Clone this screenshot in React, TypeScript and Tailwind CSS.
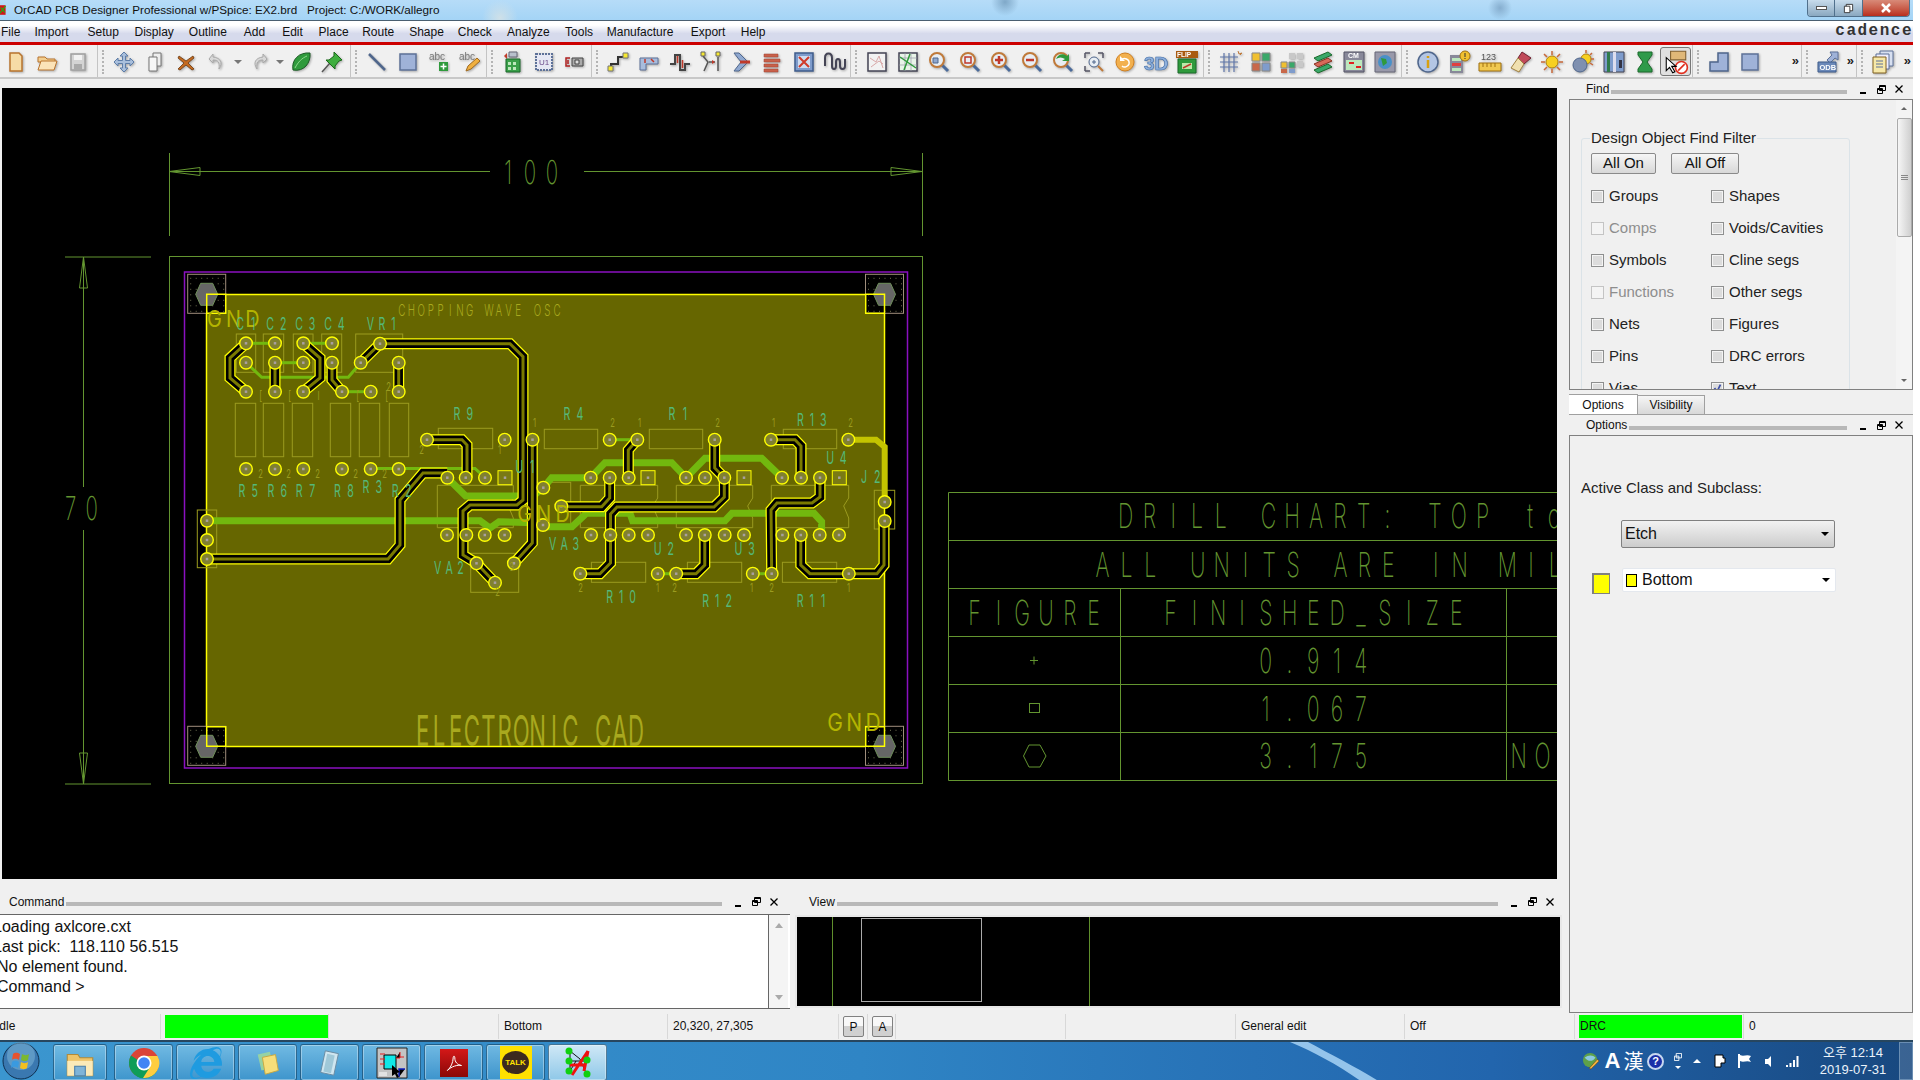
import React from 'react';
import { FaInternetExplorer } from 'react-icons/fa';

const CHART = '#639530';
const OUTLINE = '#9b9b1f';
const LABEL = '#55b878';
const SILK = '#a8a81e';

const S = ({ children, a = 'none' }: { children: React.ReactNode; a?: string }) => (
  <svg viewBox="0 0 24 24" width="24" height="24" fill={a} className="drop-shadow-[1px_1px_1px_rgba(0,0,0,0.3)]">{children}</svg>
);

const lens = (inner: React.ReactNode) => (
  <>
    <path d="M15 15l6 6" stroke="#4a6a9a" strokeWidth="3" />
    <circle cx="10" cy="10" r="7" fill="#e8eef4" stroke="#c07a3a" strokeWidth="2" />
    {inner}
  </>
);

const icons: Record<string, React.ReactNode> = {
  new: <path d="M6 3h9l3 3v15H6z" fill="#f6dca6" stroke="#b9742e" strokeWidth="1.5" />,
  open: <><path d="M3 7h7l2 2h8v3H3z" fill="#f3cf90" stroke="#b9742e" /><path d="M3 20l3-9h16l-3 9z" fill="#fbe3b8" stroke="#b9742e" /></>,
  save: <><path d="M5 4h14v16H5z" fill="#d4d4d4" stroke="#a0a0a0" strokeWidth="1.5" /><path d="M8 5h8v5H8z" fill="#f2f2f2" /><path d="M8 14h8v6H8z" fill="#aaa" /></>,
  move: <path d="M12 2l4 4h-2.500v4.500H18V8l4 4-4 4v-2.500h-4.500V18H16l-4 4-4-4h2.500v-4.500H6V16l-4-4 4-4v2.500h4.500V6H8z" fill="#a9bfdc" stroke="#5d7da8" />,
  copy: <><path d="M10 3h8v13h-8z" fill="#eee" stroke="#777" /><path d="M6 7h8v14H6z" fill="#f6f6f6" stroke="#777" /></>,
  del: <path d="M5 6l7 5 7-5 1 2-6 5 6 6-2 1-6-5-6 5-2-1 6-6-6-5z" fill="#c46a20" stroke="#6a3a10" strokeWidth=".8" />,
  undo: <path d="M8 4L4 9l4 4v-3c5 0 7 2 6 9 4-6 2-11-6-12z" fill="#d8d8d8" stroke="#aaa" />,
  redo: <path d="M16 4l4 5-4 4v-3c-5 0-7 2-6 9-4-6-2-11 6-12z" fill="#d8d8d8" stroke="#aaa" />,
  leaf: <><path d="M4 20C2 10 10 2 21 3c1 10-6 19-17 17z" fill="#2f9a3c" stroke="#1b5a24" /><path d="M6 18C9 12 13 8 18 6" stroke="#8fd88f" /></>,
  pin: <><path d="M2 22l8-9" stroke="#555" strokeWidth="1.5" /><path d="M14 2l8 8-3 1-4 5 0 3-9-9 3 0 5-4z" fill="#3fae3f" stroke="#1a6a1a" /></>,
  line: <path d="M4 4l16 16" stroke="#4f668c" strokeWidth="2.500" />,
  rect: <path d="M4 4h16v16H4z" fill="#9fb2d8" stroke="#5d7198" strokeWidth="1.5" />,
  abcadd: <><text x="2" y="10" fontSize="10" fill="#777" fontFamily="Liberation Sans">abc</text><path d="M12 12h9v9h-9z" fill="#2f9a3c" /><path d="M16.500 13.500v6M13.500 16.500h6" stroke="#fff" strokeWidth="1.5" /></>,
  abcedit: <><text x="1" y="10" fontSize="10" fill="#777" fontFamily="Liberation Sans">abc</text><path d="M8 21l2-5 9-8 3 3-9 8z" fill="#f0b040" stroke="#a06a20" /></>,
  swap: <><path d="M5 9h14v13H5z" fill="#3aa04a" stroke="#1a6a2a" /><path d="M7 12h3v3H7zM12 12h3v3h-3zM7 17h3v3H7zM12 17h3v3h-3z" fill="#bce8bc" /><path d="M8 2h8v5H8z" fill="#b8c0cc" stroke="#667" /><path d="M3 6l3-3v6z" fill="#c03a2a" /></>,
  chip: <><path d="M4 4h16v16H4z" fill="#e6e8f4" stroke="#5d7198" strokeDasharray="2 1" strokeWidth="2" /><text x="7" y="15" fontSize="8" fill="#6a4a8a" fontFamily="Liberation Sans">U1</text></>,
  conn: <><path d="M9 8h11v8H9z" fill="#aaa" stroke="#444" /><path d="M12 10h4v4h-4z" fill="#ddd" stroke="#444" /><path d="M7 8H3v8h4M5 10v4" stroke="#b02020" strokeWidth="1.5" /></>,
  route: <><path d="M5 19v-5h7V7h6" stroke="#333" strokeWidth="2" /><path d="M2 16h5v5H2zM17 3h5v5h-5z" fill="#f6e830" stroke="#777" /></>,
  slide: <><path d="M3 20V8h18v6H9v6z" fill="#a8bcdc" stroke="#5d7198" /><path d="M8 9v4M14 9l3 3" stroke="#c03a2a" strokeWidth="1.5" /></>,
  delay: <><path d="M2 14h5V5h5v15h5v-6h5" stroke="#444" strokeWidth="2" /><path d="M9.500 6v7M14.500 10v8" stroke="#c03a2a" strokeWidth="1.5" /></>,
  fanout: <><path d="M4 6l5 6-4 9M19 7v14M10 12h6" stroke="#555" strokeWidth="1.5" /><path d="M2 2h4v4H2zM17 2h4v4h-4z" fill="#f6e830" stroke="#666" /><path d="M16 12l-3-2v4z" fill="#c03a2a" /></>,
  chev: <><path d="M4 3h5l9 9-9 9H4l7-9z" fill="#8fa8d0" stroke="#4f668c" /><path d="M10 12h10" stroke="#c03a2a" strokeWidth="3" /></>,
  bars: <path d="M3 4h14v3H3zM3 9h16v3H3zM3 14h14v3H3zM3 19h14v3H3z" fill="#c8604a" stroke="#a04030" strokeWidth=".5" />,
  matrix: <><path d="M3 3h18v18H3z" fill="#7f9ccc" stroke="#3f5c8c" strokeWidth="1.5" /><path d="M6 6h12v12H6z" fill="#cfdcf0" /><path d="M7 7l10 10M17 7L7 17" stroke="#d03a2a" strokeWidth="2" /></>,
  wave: <path d="M2 16V8c0-6 7-6 7 0v8c0 4 4 4 4 0v-4c0-4 4-4 4 0v4c0 4 5 4 5 0V9" stroke="#445" strokeWidth="2" />,
  rats: <><path d="M3 3h18v18H3z" fill="#f2f2f2" stroke="#445" strokeWidth="1.5" /><path d="M5 8l6 4 3-6 4 12M6 17l8-6 4 3" stroke="#d8a8a8" /></>,
  ratsg: <><path d="M3 3h18v18H3z" fill="#e8f4e8" stroke="#445" strokeWidth="1.5" /><path d="M3 8h18M3 15h18M9 3v18M15 3v18" stroke="#99a" strokeWidth=".7" /><path d="M4 7l16 11M8 20l6-16" stroke="#2f9a3c" strokeWidth="1.5" /></>,
  zfit: lens(<path d="M6 8h5v5H6z" fill="#8fa8d0" stroke="#4f668c" />),
  zsel: lens(<path d="M7 7h6v6H7z" stroke="#c0392b" strokeWidth="1.5" />),
  zin: lens(<path d="M6 10h8M10 6v8" stroke="#c0392b" strokeWidth="2.500" />),
  zout: lens(<path d="M6 10h8" stroke="#c0392b" strokeWidth="2.500" />),
  zprev: lens(<path d="M5 9c2-5 7-6 11-3l2-2v7h-7l3-2c-3-2-6-2-9 0z" fill="#2f9a3c" />),
  zworld: <><path d="M3 3h5M3 3v5M21 3h-5M21 3v5M3 21h5M3 21v-5" stroke="#556" strokeWidth="1.5" /><circle cx="12" cy="12" r="5" fill="#e8eef4" stroke="#4f668c" /><path d="M16 16l5 5" stroke="#c07a3a" strokeWidth="2" /><path d="M10 12h4M12 10v4" stroke="#4f668c" /></>,
  refresh: <><circle cx="12" cy="12" r="9" fill="#f2b04e" stroke="#d08020" /><path d="M8 10c3-3 9-1 8 4-1 3-5 4-7 2" stroke="#fff" strokeWidth="1.5" /><path d="M7 6v5h5z" fill="#fff" /></>,
  three: <text x="0" y="20" fontSize="19" fontWeight="700" fill="#8fb0dc" stroke="#3f6ca8" strokeWidth=".6" fontFamily="Liberation Sans">3D</text>,
  flip: <><path d="M1 1h22v7H1z" fill="#a85a10" /><text x="2" y="7" fontSize="6.500" fontWeight="700" fill="#fff" fontFamily="Liberation Sans">FLIP</text><path d="M3 9h18v14H3z" fill="#2f9a3c" stroke="#1a6a2a" /><path d="M7 13h10v6H7z" fill="#bfe8a8" /><path d="M8 18l8-4" stroke="#c03a2a" strokeWidth="1.5" /></>,
  grid: <><path d="M2 7h18M2 12h18M2 17h18M6 3v19M11 3v19M16 3v19" stroke="#5f76a8" strokeWidth="1.2" /><path d="M20 1l1 3 3-1-2 2" stroke="#c07a3a" /></>,
  colorsAll: <><path d="M3 3h8v8H3z" fill="#f0c030" stroke="#888" /><path d="M13 3h8v8h-8z" fill="#3aa86a" stroke="#888" /><path d="M3 13h8v8H3z" fill="#c8684a" stroke="#888" /><path d="M13 13h8v8h-8z" fill="#7f9ccc" stroke="#888" /></>,
  colorsDim: <><path d="M1 12h6v6H1z" fill="#f0c030" stroke="#888" /><path d="M9 12h6v6H9z" fill="#3aa86a" stroke="#888" /><path d="M1 19h6v4H1z" fill="#c8684a" /><path d="M9 19h6v4H9z" fill="#7f9ccc" /><path d="M9 3h6v6H9zM17 3h6v6h-6zM17 11h6v6h-6z" fill="#c8c8c8" /></>,
  layers: <><path d="M3 8l14-6 4 3-14 6z" fill="#3aa86a" stroke="#1a6a2a" /><path d="M3 14l14-6 4 3-14 6z" fill="#d86a5a" stroke="#8a3020" /><path d="M3 20l14-6 4 3-14 6z" fill="#3aa86a" stroke="#1a6a2a" /></>,
  cm: <><path d="M2 2h20v20H2z" fill="#889" stroke="#556" /><text x="6" y="8" fontSize="7" fontWeight="700" fill="#fff" fontFamily="Liberation Sans">CM</text><path d="M4 10h16v10H4z" fill="#bce8bc" /><path d="M7 12h5v2H7zM14 16h5v2h-5z" fill="#e02020" /></>,
  globe: <><path d="M2 2h20v20H2z" fill="#99a" stroke="#667" /><circle cx="12" cy="12" r="7" fill="#4a90c8" /><path d="M8 8l5 1 1 4-4 3z" fill="#2f9a3c" /></>,
  info: <><circle cx="12" cy="12" r="10" fill="#b4c6e4" stroke="#4f668c" strokeWidth="1.5" /><path d="M12 6v2M12 10v8" stroke="#d8a010" strokeWidth="2.500" /></>,
  props: <><path d="M3 5h13v18H3z" fill="#889" /><path d="M5 8h9v3H5z" fill="#bce8bc" /><path d="M5 13h9v3H5z" fill="#e04040" /><path d="M5 18h9v3H5z" fill="#bce8bc" /><circle cx="18" cy="6" r="5" fill="#f0c030" stroke="#a07010" /><path d="M18 3v4M18 8v1" stroke="#333" /></>,
  ruler: <><text x="3" y="10" fontSize="9" fill="#555" fontFamily="Liberation Sans">123</text><path d="M1 13h22v8H1z" fill="#f0c850" stroke="#a07010" /><path d="M5 13v4M9 13v4M13 13v4M17 13v4" stroke="#a07010" /></>,
  brush: <><path d="M13 2l9 6-7 6-6-6z" fill="#c04a5a" stroke="#702030" /><path d="M9 8l6 6-5 8-8-4z" fill="#f0e0b0" stroke="#a08040" /></>,
  sun: <><circle cx="12" cy="12" r="6" fill="#f6d020" stroke="#b08010" /><path d="M12 1v4M12 19v4M1 12h4M19 12h4M4 4l3 3M17 17l3 3M4 20l3-3M17 7l3-3" stroke="#c8683a" strokeWidth="1.5" /></>,
  sunball: <><circle cx="15" cy="9" r="5" fill="#f6d020" stroke="#b08010" /><path d="M15 0v3M23 9h-3M21 3l-2 2M22 15l-3-2" stroke="#c8683a" strokeWidth="1.5" /><circle cx="9" cy="15" r="7" fill="#7f90b0" stroke="#4f668c" /></>,
  columns: <><path d="M2 2h20v20H2z" fill="#7f9ccc" stroke="#445" /><path d="M5 2h3v20H5z" fill="#2f7a4a" /><path d="M11 2h3v20h-3z" fill="#dde" /><path d="M17 10h3v8h-3z" fill="#334" /></>,
  hour: <path d="M5 2h14v3l-5 7 5 7v3H5v-3l5-7-5-7z" fill="#2f9a4a" stroke="#1a6a2a" />,
  shape1: <path d="M3 21V12h8V3h10v18z" fill="#9fb2d8" stroke="#4f668c" strokeWidth="1.5" />,
  odb: <><path d="M14 2h8v8l-3-2-5 5-3-3 5-5z" fill="#9fb2d8" stroke="#5d7198" /><path d="M2 12h18v10H2z" fill="#6a88b8" stroke="#3f5c8c" /><text x="3.500" y="20" fontSize="7.500" fontWeight="700" fill="#fff" fontFamily="Liberation Sans">ODB</text></>,
  stack: <><path d="M9 1h13v15H9z" fill="#d8e0f0" stroke="#5d7198" /><path d="M5 4h13v15H5z" fill="#eef" stroke="#5d7198" /><path d="M2 7h13v16H2z" fill="#f6e8a8" stroke="#806020" /><path d="M5 11h7M5 14h7M5 17h7" stroke="#5d7198" /></>,
};

const Tb = ({ n }: { n: string }) => (
  <div className="w-[31px] h-[33px] shrink-0 flex items-center justify-center">
    <S>{icons[n]}</S>
  </div>
);

const Dd = () => (
  <div className="w-[11px] h-[33px] shrink-0 flex items-center justify-center">
    <div className="w-0 h-0 border-x-[4px] border-x-transparent border-t-[4px] border-t-[#777]" />
  </div>
);

const Grip = () => (
  <div className="w-[10px] h-[33px] shrink-0 flex items-center pl-[4px]">
    <div className="h-[24px] border-l-2 border-dotted border-[#b4b4b4]" />
  </div>
);

const More = () => <div className="text-[13px] font-bold text-[#222] leading-none ml-auto pr-[2px] pb-[2px]">»</div>;

const Group = ({ className, grip = true, children }: { className: string; grip?: boolean; children: React.ReactNode }) => (
  <div className={`h-[33px] shrink-0 flex items-center border-r border-[#c4c4c4] ${className}`}>
    {grip && <Grip />}
    {children}
  </div>
);

function Toolbar() {
  return (
    <div className="h-[34px] flex bg-[#f0f0f0] border-b-2 border-[#c8c8c8] overflow-hidden">
      <Group className="w-[98px]" grip={false}>
        {['new', 'open', 'save'].map((n) => <Tb key={n} n={n} />)}
      </Group>
      <Group className="w-[253px]">
        <Tb n="move" /><Tb n="copy" /><Tb n="del" /><Tb n="undo" /><Dd /><Tb n="redo" /><Dd /><Tb n="leaf" /><Tb n="pin" />
      </Group>
      <Group className="w-[136px]">
        {['line', 'rect', 'abcadd', 'abcedit'].map((n) => <Tb key={n} n={n} />)}
      </Group>
      <Group className="w-[105px]">
        {['swap', 'chip', 'conn'].map((n) => <Tb key={n} n={n} />)}
      </Group>
      <Group className="w-[259px]">
        {['route', 'slide', 'delay', 'fanout', 'chev', 'bars', 'matrix', 'wave'].map((n) => <Tb key={n} n={n} />)}
      </Group>
      <Group className="w-[353px]">
        {['rats', 'ratsg', 'zfit', 'zsel', 'zin', 'zout', 'zprev', 'zworld', 'refresh', 'three', 'flip'].map((n) => <Tb key={n} n={n} />)}
      </Group>
      <Group className="w-[198px]">
        {['grid', 'colorsAll', 'colorsDim', 'layers', 'cm', 'globe'].map((n) => <Tb key={n} n={n} />)}
      </Group>
      <Group className="w-[291px]">
        {['info', 'props', 'ruler', 'brush', 'sun', 'sunball', 'columns', 'hour'].map((n) => <Tb key={n} n={n} />)}
        <div className="relative w-[31px] h-[29px] shrink-0 flex items-center justify-center border border-[#777] rounded-[3px] bg-[#e0e0e0]">
          <svg viewBox="0 0 24 24" width="26" height="26" fill="none">
            <path d="M7 2h14v8H7z" fill="#e0b878" stroke="#806030" />
            <circle cx="17" cy="17" r="5.500" fill="#fff" stroke="#e03020" strokeWidth="1.5" />
            <path d="M14 20l6-6" stroke="#e03020" strokeWidth="1.5" />
            <path d="M3 8l0 12 3-3 3 5 2-1-3-5h4z" fill="#fff" stroke="#000" />
          </svg>
        </div>
      </Group>
      <Group className="w-[109px]">
        <Tb n="shape1" /><Tb n="rect" /><More />
      </Group>
      <Group className="w-[55px]">
        <Tb n="odb" /><More />
      </Group>
      <Group className="w-[56px] border-r-0">
        <Tb n="stack" /><More />
      </Group>
    </div>
  );
}

const menus: [string, string][] = [
  ['File', 'w-[33.5px]'], ['Import', 'w-[53px]'], ['Setup', 'w-[47px]'], ['Display', 'w-[54.3px]'], ['Outline', 'w-[55px]'],
  ['Add', 'w-[38.4px]'], ['Edit', 'w-[36.4px]'], ['Place', 'w-[43.6px]'], ['Route', 'w-[47px]'], ['Shape', 'w-[48.6px]'],
  ['Check', 'w-[49.3px]'], ['Analyze', 'w-[58px]'], ['Tools', 'w-[41.7px]'], ['Manufacture', 'w-[84px]'], ['Export', 'w-[50px]'], ['Help', 'w-[40px]'],
];

const DockTitle = ({ title, className, bar = '' }: { title: string; className: string; bar?: string }) => (
  <div className={`flex items-center text-[12px] text-[#111] ${className}`}>
    <span>{title}</span>
    <div className={`flex-1 h-[4px] bg-[#b8b8b8] mt-[5px] ml-[2px] ${bar}`} />
    <div className="ml-[7px] w-[18px] flex justify-center pt-[8px]"><div className="w-[6px] h-[2px] bg-black" /></div>
    <div className="w-[18px] flex justify-center">
      <svg viewBox="0 0 9 9" width="9" height="9" fill="none" stroke="#000"><path d="M2.500.500h6v5h-6zM2.500 1.500h6" /><path d="M.500 3.500h5v5h-5zM.500 4.500h5" /></svg>
    </div>
    <div className="w-[18px] flex justify-center">
      <svg viewBox="0 0 8 8" width="8" height="8" fill="none" stroke="#000" strokeWidth="1.3"><path d="M.500.500l7 7M7.500.500l-7 7" /></svg>
    </div>
  </div>
);

const Check = ({ label, off, on }: { label: string; off?: boolean; on?: boolean }) => (
  <div className={`flex items-center gap-[5px] h-[32px] text-[15px] ${off ? 'text-[#8d8d8d]' : 'text-[#222]'}`}>
    <div className={`relative w-[13px] h-[13px] border bg-[#f4f4f4] flex items-center justify-center ${off ? 'border-[#c4c4c4]' : 'border-[#8e8f8f]'}`}>
      {!off && <div className="w-[9px] h-[9px] bg-[#dcdcdc]" />}
      {on && (
        <svg className="absolute inset-0" viewBox="0 0 13 13" fill="none" stroke="#3c4fa8" strokeWidth="2"><path d="M3 6l3 4 4-8" /></svg>
      )}
    </div>
    <span>{label}</span>
  </div>
);

const Triangle = () => <div className="w-0 h-0 border-x-[4px] border-x-transparent border-t-[4px] border-t-black" />;

function FindPanel() {
  return (
    <div className="relative h-[291px] border border-[#808080] overflow-hidden bg-[#f0f0f0] flex">
      <div className="w-[326px]">
        <div className="relative mt-[38px] ml-[11px] w-[269px] h-[300px] border border-[#dbe3e8] rounded-[3px] pl-[9px]">
          <span className="absolute -top-[10px] left-[8px] px-[1px] bg-[#f0f0f0] text-[15px] leading-[18px] text-[#222]">Design Object Find Filter</span>
          <div className="flex gap-[15px] pt-[14px] text-[15px] text-[#111]">
            <div className="w-[65px] h-[21px] flex items-center justify-center border border-[#8a8a8a] rounded-[2px] bg-linear-to-b from-[#f6f6f6] to-[#d8d8d8]">All On</div>
            <div className="w-[68px] h-[21px] flex items-center justify-center border border-[#8a8a8a] rounded-[2px] bg-linear-to-b from-[#f6f6f6] to-[#d8d8d8]">All Off</div>
          </div>
          <div className="grid grid-cols-[120px_1fr] mt-[6px]">
            <Check label="Groups" /><Check label="Shapes" />
            <Check label="Comps" off /><Check label="Voids/Cavities" />
            <Check label="Symbols" /><Check label="Cline segs" />
            <Check label="Functions" off /><Check label="Other segs" />
            <Check label="Nets" /><Check label="Figures" />
            <Check label="Pins" /><Check label="DRC errors" />
            <Check label="Vias" /><Check label="Text" on />
          </div>
        </div>
      </div>
      <div className="relative w-[16px] bg-[#f4f4f4] flex flex-col items-center">
        <div className="mt-[7px] w-0 h-0 border-x-[3px] border-x-transparent border-b-[3px] border-b-[#666]" />
        <div className="mt-[8px] w-[15px] h-[119px] bg-linear-to-r from-[#f6f6f6] to-[#cfcfcf] border border-[#aaa] rounded-[2px] flex flex-col items-center justify-center gap-[1px]">
          <div className="w-[7px] h-px bg-[#888]" /><div className="w-[7px] h-px bg-[#888]" /><div className="w-[7px] h-px bg-[#888]" />
        </div>
        <div className="mt-auto mb-[7px] w-0 h-0 border-x-[3px] border-x-transparent border-t-[3px] border-t-[#666]" />
      </div>
    </div>
  );
}

function OptionsPanel() {
  return (
    <div className="flex-1 border border-[#808080] bg-[#f0f0f0] pl-[11px]">
      <div className="mt-[43px] text-[15px] leading-[18px] text-[#222]">Active Class and Subclass:</div>
      <div className="mt-[23px] ml-[40px] w-[214px] h-[28px] flex items-center justify-between pl-[3px] pr-[5px] border border-[#808080] rounded-[2px] bg-linear-to-b from-[#f2f2f2] to-[#cccccc] text-[16px] text-[#111]">
        <span>Etch</span>
        <Triangle />
      </div>
      <div className="flex items-start mt-[20px] ml-[11px]">
        <div className="mt-[5px] w-[18px] h-[21px] bg-[#ffff00] border-2 border-r border-b border-[#808080]" />
        <div className="ml-[12px] w-[214px] h-[24px] flex items-center justify-between pl-[3px] pr-[5px] bg-white border border-[#e4e8ee] rounded-[2px] text-[16px] text-[#111]">
          <div className="flex items-center gap-[5px]">
            <div className="w-[11px] h-[13px] bg-[#ffff00] border border-black" />
            <span>Bottom</span>
          </div>
          <Triangle />
        </div>
      </div>
    </div>
  );
}

const cad = { fontFamily: 'Inter' };

const CadText = ({ x, y, h, p, t, c, sx = 0.62, w = 200 }: { x: number; y: number; h: number; p: number; t: string; c: string; sx?: number; w?: number }) => {
  const xs = t.split('').map((_, i) => ((i + 0.32) * p) / sx).join(' ');
  return (
    <text transform={`translate(${x} ${y}) scale(${sx} 1)`} x={xs} y={0} fontSize={h / 0.727} fill={c} textAnchor="middle" fontWeight={w} {...cad}>
      {t}
    </text>
  );
};

type Pt = number[][];
const pts = (a: Pt) => a.map((p) => p.join(',')).join(' ');

const traces: Pt[] = [
  [[246, 343.3], [230, 358], [230, 378], [246, 391.7]],
  [[275, 362.7], [275, 391.7]],
  [[303.3, 343.3], [320, 358], [320, 378], [303.3, 391.7]],
  [[332, 362.7], [332, 380], [342, 391.7]],
  [[360.7, 362.7], [380, 343.7], [510, 343.7], [523, 356.7], [523, 500], [517, 505], [470, 505], [463, 511], [463, 555], [476.5, 563.3], [495, 582.7]],
  [[398.7, 362.7], [398.7, 391.7]],
  [[427, 439.7], [462, 439.7], [467, 445], [467, 477.7]],
  [[532.3, 439.7], [532.3, 543], [513.9, 563.3]],
  [[447.3, 473], [423, 473], [400, 500], [400, 545], [388, 559], [207, 559]],
  [[609.7, 477.7], [609.7, 498], [601.7, 506.7], [561.3, 506.7]],
  [[637.3, 439.7], [628.3, 450], [628.3, 477.7]],
  [[714.7, 439.7], [714.7, 468], [724.3, 477.7], [724.3, 497], [714, 507], [617, 507], [610.5, 514], [610.5, 563], [600, 573.7], [580.3, 573.7]],
  [[771, 439.7], [795, 439.7], [801, 446], [801, 477.7]],
  [[820, 477.7], [820, 497], [812, 503], [777, 503], [771, 510], [771.7, 573.7]],
  [[800.8, 535], [800.8, 565], [810, 573.7], [877, 573.7], [884, 565], [884, 521]],
  [[704.8, 535], [704.8, 565], [696, 573.7], [676.2, 573.7]],
];

const thickGreen: Pt[] = [
  [[207, 520.7], [480, 520.7], [490, 528], [499, 521.7], [543, 523], [548, 526.7], [572, 526.7], [586.5, 513.3], [630, 513.3], [632.6, 520.7], [725, 520.7], [732, 513.3], [814, 513.3], [821.6, 521.7], [821.6, 535]],
  [[447.3, 477.7], [465.7, 496], [533, 496], [543.3, 487.7], [551.7, 477.7], [590.7, 477.7], [605, 462.7], [671.7, 462.7], [686, 477.7], [705, 458.3], [761.7, 458.3], [782, 477.7]],
];

const thinGreen: Pt[] = [
  [[246, 362.7], [261.7, 377.3], [348.3, 377.3], [360.7, 362.7]],
  [[246, 343.3], [275, 343.3]],
  [[303.3, 343.3], [332, 343.3]],
  [[275, 362.7], [303.3, 362.7]],
  [[342, 391.7], [370.7, 391.7]],
  [[370.7, 468.5], [475, 468.5], [485, 477.7]],
  [[609.7, 439.7], [637.3, 439.7]],
  [[657.8, 573.7], [676.2, 573.7]],
  [[752.8, 573.7], [771.7, 573.7]],
];

const pads: number[][] = [
  [246, 343.3], [275, 343.3], [303.3, 343.3], [332, 343.3], [380, 343.7],
  [246, 362.7], [275, 362.7], [303.3, 362.7], [332, 362.7], [360.7, 362.7], [398.7, 362.7],
  [246, 391.7], [275, 391.7], [303.3, 391.7], [342, 391.7], [370.7, 391.7], [398.7, 391.7],
  [246, 469], [275, 469], [303.3, 469], [342, 469], [370.7, 469], [398.7, 469],
  [427, 439.7], [504.7, 439.7], [532.5, 439.7], [609.7, 439.7], [637.3, 439.7], [714.7, 439.7], [771, 439.7], [848.3, 439.7],
  [447.3, 477.7], [465.7, 477.7], [485, 477.7], [590.7, 477.7], [609.7, 477.7], [628.7, 477.7], [686, 477.7], [705, 477.7], [724.3, 477.7], [782, 477.7], [801, 477.7], [820, 477.7],
  [447, 535], [466.3, 535], [484.8, 535], [504.6, 535], [591, 535], [610.3, 535], [628.7, 535], [648, 535], [686, 535], [704.8, 535], [724.7, 535], [744, 535], [782.4, 535], [800.8, 535], [819.7, 535], [839, 535],
  [884.7, 502], [884.7, 521], [207, 520.7], [207, 540], [207, 559],
  [476.5, 563.3], [513.9, 563.3], [495, 582.7], [543.3, 487.7], [561.3, 506.3], [543, 525],
  [580.3, 573.7], [657.8, 573.7], [676.2, 573.7], [752.8, 573.7], [771.7, 573.7], [848.8, 573.7],
];

const squares: number[][] = [[505, 477.7], [648, 477.7], [744, 477.7], [839.3, 477.7]];

const boxes: number[][] = [
  [236.3, 334, 19.4, 38.3], [263.3, 334, 20.4, 38.3], [293.3, 334, 19.7, 38.3], [321.7, 334, 20, 38.3], [355.7, 334, 47, 38.3],
  [235.3, 403.3, 20.4, 53.4], [263.3, 403.3, 20.4, 53.4], [292.3, 403.3, 20.4, 53.4], [330.3, 403.3, 20.4, 53.4], [359.3, 403.3, 20.4, 53.4], [389.3, 403.3, 19.4, 53.4],
  [438.3, 428.3, 54.4, 20.4], [544.3, 429.3, 53.4, 19.4], [649.3, 429.3, 53.4, 19.4], [783.3, 429.3, 53.4, 19.4],
  [874.3, 490.3, 20.4, 38.7], [531.7, 482.3, 39, 46.7], [470.7, 553.3, 48, 39],
  [591.4, 562.3, 54.3, 20], [687.4, 562.3, 54.3, 20], [782.4, 562.3, 54.3, 20], [197.3, 510, 19.4, 57.7],
];

const chips = [[437.3, 513.3], [580.3, 657.7], [676.3, 752.7], [771.3, 848.7]];

const labels: [string, number, number][] = [
  ['C1', 236, 329.7], ['C2', 266, 329.7], ['C3', 295, 329.7], ['C4', 324, 329.7], ['VR1', 366.7, 329.7],
  ['R5', 237.7, 496.7], ['R6', 266.7, 496.7], ['R7', 295, 496.7], ['R8', 333.3, 496.7], ['R3', 361.7, 492.7], ['R2', 391, 496.7],
  ['R9', 452.7, 420], ['R4', 562.7, 420], ['R1', 667.7, 420], ['R13', 796.7, 425.7], ['U4', 826, 464], ['J2', 860, 482.7], ['U1', 515, 472.7],
  ['VA3', 549, 550], ['VA2', 433.9, 574], ['U2', 653.5, 555], ['U3', 734.4, 555], ['R10', 606, 602.7], ['R12', 702, 607], ['R11', 796.5, 607],
];

const pins: [string, number, number][] = [
  ['2', 258, 478], ['2', 286, 478], ['2', 315, 478], ['2', 353, 478], ['2', 382, 478], ['2', 386, 391], ['[', 258, 400], ['[', 287, 400], ['I', 316, 400], ['[', 355, 400], ['[', 384, 400],
  ['2', 419, 454], ['1', 497, 454], ['1', 532, 427], ['2', 610, 427], ['1', 637, 427], ['2', 715, 427], ['1', 771, 427], ['2', 848, 427],
  ['2', 578, 592], ['1', 655, 592], ['2', 672, 592], ['1', 749, 592], ['2', 769, 592], ['1', 846, 592], ['2', 495, 596], ['3', 509, 571],
];

const Mount = ({ x, y, lines }: { x: number; y: number; lines: string }) => {
  const dots: number[][] = [];
  for (let i = -3; i <= 3; i++) for (let j = -3; j <= 3; j++) if (Math.abs(i) === 3 || Math.abs(j) === 3 || (i + j) % 3 === 0) dots.push([x + i * 5.5, y + j * 5.5]);
  return (
    <g>
      <rect x={x - 19} y={y - 20} width={38} height={39} fill="#000" stroke="#a08e7c" />
      {dots.map((d, i) => <rect key={i} x={d[0]} y={d[1]} width={1} height={1} fill="#6f6f50" />)}
      <polygon points={`${x - 11},${y} ${x - 6},${y - 11} ${x + 6},${y - 11} ${x + 11},${y} ${x + 6},${y + 11} ${x - 6},${y + 11}`} fill="#666" stroke="#6f8f5a" />
      <polygon points={lines} fill="none" stroke="#ffff00" strokeWidth="1.5" />
    </g>
  );
};

function Board() {
  return (
    <svg viewBox="2 88 1555 791" width="1555" height="791" className="block">
      {/* dimensions */}
      <g stroke={CHART} fill="none">
        <path d="M169.5 153V236M922.5 153V236M169 171.5H490M584 171.5H922M65 257H151M65 784H151M83.500 257V487M83.500 530V784" />
        <path d="M169 171.5l31-4v8zM922 171.5l-31-4v8zM83.500 257l-4 31h8zM83.500 784l-4-31h8z" />
        <rect x="169.5" y="256.5" width="753" height="527" />
      </g>
      <CadText x={501} y={184} h={24} p={22} t="100" c={CHART} />
      <CadText x={64} y={520} h={24} p={21} t="70" c={CHART} />

      <rect x="184.5" y="272" width="723" height="496" fill="none" stroke="#8a10c0" strokeWidth="1.5" />
      <rect x="206.5" y="294.5" width="678" height="452" fill="#666600" stroke="#ffff00" strokeWidth="1.5" />

      {/* silk outlines */}
      <g fill="none" stroke={OUTLINE}>
        {boxes.map((b, i) => <rect key={i} x={b[0]} y={b[1]} width={b[2]} height={b[3]} />)}
        {chips.map((c, i) => (
          <path key={i} d={`M${c[0]} 485.3H${c[1]}V498L${c[1] - 5} 506L${c[1]} 518V527.7H${c[0]}Z`} />
        ))}
      </g>

      {/* top layer */}
      <g fill="none" stroke="#72b80e" strokeLinejoin="miter">
        {thickGreen.map((t, i) => <polyline key={i} points={pts(t)} strokeWidth={7} />)}
        {thinGreen.map((t, i) => <polyline key={i} points={pts(t)} strokeWidth={3} />)}
      </g>
      <polyline points="848.3,439.7 876,439.7 884.7,447 884.7,502" fill="none" stroke="#c4c400" strokeWidth="6" />

      {/* bottom layer */}
      <g fill="none">
        {traces.map((t, i) => <polyline key={i} points={pts(t)} stroke="#ffff00" strokeWidth={11} />)}
        {traces.map((t, i) => <polyline key={i} points={pts(t)} stroke="#000" strokeWidth={8.5} />)}
        {traces.map((t, i) => <polyline key={i} points={pts(t)} stroke="#7a7a00" strokeWidth={3} />)}
      </g>

      {squares.map((p, i) => (
        <g key={i}>
          <rect x={p[0] - 7} y={p[1] - 7} width={14} height={14} fill="#7a7a14" stroke="#ffff00" />
          <rect x={p[0] - 1.25} y={p[1] - 1.25} width={2.5} height={2.5} fill="#a8a0a0" />
        </g>
      ))}
      {pads.map((p, i) => (
        <g key={i}>
          <circle cx={p[0]} cy={p[1]} r={6.3} fill="#808030" stroke="#ffff00" strokeWidth="1.4" />
          <rect x={p[0] - 1.25} y={p[1] - 1.25} width={2.5} height={2.5} fill="#a8a0a0" />
        </g>
      ))}

      <Mount x={206.7} y={294.3} lines="206.7,294.3 225.7,294.3 225.7,313.3 206.7,313.3" />
      <Mount x={884.5} y={294.3} lines="884.5,294.3 865.7,294.3 865.7,313.3 884.5,313.3" />
      <Mount x={206.7} y={746.3} lines="206.7,746.3 225.7,746.3 225.7,726.7 206.7,726.7" />
      <Mount x={884.5} y={746.3} lines="884.5,746.3 865.7,746.3 865.7,726.7 884.5,726.7" />

      {/* board text */}
      <CadText x={208.3} y={327.3} h={17} p={19} t="GND" c="#b4b400" w={400} sx={0.85} />
      <CadText x={518.7} y={521.7} h={17} p={19} t="GND" c="#b4b400" w={400} sx={0.85} />
      <CadText x={829} y={730.7} h={18} p={19} t="GND" c="#b4b400" w={400} sx={0.85} />
      <CadText x={398.7} y={316} h={11.5} p={9.7} t="CHOPPING WAVE OSC" c={SILK} w={300} />
      <CadText x={417.5} y={746} h={31} p={16.4} t="ELECTRONIC CAD" c={SILK} w={400} sx={0.52} />
      {labels.map(([t, x, y]) => <CadText key={t} x={x} y={y} h={12.5} p={t.length > 2 ? 11.5 : 13} t={t} c={LABEL} w={400} />)}
      {pins.map(([t, x, y], i) => <CadText key={i} x={x} y={y} h={9} p={8} t={t} c={OUTLINE} w={400} />)}

      {/* drill chart */}
      <g stroke={CHART} fill="none">
        <path d="M948.5 492.500H1557M948.5 540.500H1557M948.5 588.500H1557M948.5 636.500H1557M948.5 684.500H1557M948.5 732.500H1557M948.5 780.500H1557" />
        <path d="M948.5 492.500V780.500M1120.500 588.500V780.500M1506.500 588.500V780.500" />
        <path d="M1030 660.500h8M1034 656.500v8" />
        <rect x="1029.5" y="703.5" width="10" height="9" />
        <polygon points="1023.500,756 1029,745 1040,745 1046,756 1040,767 1029,767" />
      </g>
      <CadText x={1118} y={528.3} h={25} p={23.8} t="DRILL CHART: TOP to BOTTOM" c={CHART} />
      <CadText x={1095} y={577} h={25} p={23.8} t="ALL UNITS ARE IN MILLIMETERS" c={CHART} />
      <CadText x={967} y={625} h={25} p={23.8} t="FIGURE" c={CHART} />
      <CadText x={1163} y={625} h={25} p={23.8} t="FINISHED_SIZE" c={CHART} />
      <CadText x={1258} y={673.3} h={25} p={23.8} t="0.914" c={CHART} />
      <CadText x={1258} y={720.7} h={25} p={23.8} t="1.067" c={CHART} />
      <CadText x={1258} y={768.3} h={25} p={23.8} t="3.175" c={CHART} />
      <CadText x={1511} y={768.3} h={25} p={23.8} t="NON" c={CHART} />
    </svg>
  );
}

const TaskBtn = ({ children, active, className = 'w-[59px]' }: { children: React.ReactNode; active?: boolean; className?: string }) => (
  <div className={`h-[37px] mt-[2px] shrink-0 flex items-center justify-center rounded-[3px] border border-[#0d3a5c]/60 shadow-[inset_0_0_0_1px_rgba(255,255,255,0.35)] ${className} ${active ? 'bg-linear-to-b from-[#cfe8f6] to-[#8fc8e8]' : 'bg-linear-to-b from-[#7fc4e8]/80 to-[#3f96cc]/80'}`}>
    {children}
  </div>
);

function Taskbar() {
  return (
    <div className="relative h-[40px] flex items-start border-t-2 border-[#27465f] bg-[linear-gradient(90deg,#3b96cf_0%,#2f85c5_45%,#2265ad_78%,#18487f_100%)] overflow-hidden">
      <svg className="absolute left-[1290px] top-0" width="90" height="40" viewBox="0 0 90 40">
        <path d="M0 0h18C40 12 68 26 90 40H72C50 24 24 10 0 0z" fill="#a8d4f4" opacity=".85" />
      </svg>
      <div className="w-[41px] h-[38px] shrink-0 flex items-center justify-center">
        <svg viewBox="0 0 38 38" width="38" height="38">
          <circle cx="19" cy="19" r="18" fill="#3a78b0" stroke="#0f3050" />
          <circle cx="19" cy="14" r="14" fill="#8cc0e0" opacity=".45" />
          <path d="M11 12c3-2 5-1 7 0l-1 6c-2-1-4-2-7 0z" fill="#e8532e" />
          <path d="M20 12c2 1 4 2 7 0l-1 6c-3 2-5 1-7 0z" fill="#7cb82e" />
          <path d="M10 20c3-2 5-1 7 0l-1 6c-2-1-4-2-7 0z" fill="#3a9ae0" />
          <path d="M19 20c2 1 4 2 7 0l-1 6c-3 2-5 1-7 0z" fill="#f4c020" />
        </svg>
      </div>
      <div className="flex gap-[3px] ml-[12px]">
        <TaskBtn className="w-[54px] mr-[4px]">
          <svg viewBox="0 0 32 32" width="34" height="34">
            <path d="M4 8h10l2 3h12v17H4z" fill="#eec46a" stroke="#b08a3a" />
            <path d="M4 14h24v14H4z" fill="#fbeab8" />
            <path d="M11 19h10v9H11z" fill="#7fb4d8" stroke="#4a7fa8" />
          </svg>
        </TaskBtn>
        <TaskBtn>
          <svg viewBox="0 0 32 32" width="32" height="32">
            <circle cx="16" cy="16" r="15" fill="#db4437" />
            <path d="M16 16L29 24A15 15 0 0 1 9 29.500z" fill="#0f9d58" />
            <path d="M3 8.500A15 15 0 0 0 12 30.500l6-12z" fill="#0f9d58" />
            <path d="M16 9h13.500A15 15 0 0 1 15 31l7-11z" fill="#ffcd40" />
            <circle cx="16" cy="16" r="7.500" fill="#fff" />
            <circle cx="16" cy="16" r="5.800" fill="#4285f4" />
          </svg>
        </TaskBtn>
        <TaskBtn><FaInternetExplorer size={32} color="#1f9be0" /></TaskBtn>
        <TaskBtn>
          <svg viewBox="0 0 32 32" width="30" height="30">
            <path d="M5 7l13-3 4 17-13 3z" fill="#9fd89a" opacity=".85" />
            <path d="M10 10l14-3 3 17-14 4z" fill="#f6de7a" stroke="#c8a840" />
          </svg>
        </TaskBtn>
        <TaskBtn>
          <svg viewBox="0 0 32 32" width="30" height="30">
            <path d="M11 3l14 3-5 23-14-3z" fill="#cfe6f0" stroke="#6a8aa0" />
            <path d="M13 6l8 2-4 19-8-2z" fill="#7fb4c8" opacity=".6" />
          </svg>
        </TaskBtn>
        <TaskBtn>
          <svg viewBox="0 0 32 32" width="32" height="32">
            <path d="M1 1h30v30H1z" fill="#c4c4c4" stroke="#222" />
            <path d="M8 8h12v14H8z" fill="#10e8e8" stroke="#000" />
            <path d="M4 7h5M4 12h5M4 17h5M20 11h4v-6M24 10h4" stroke="#e02020" />
            <path d="M23 30v-8h6" stroke="#1020c0" strokeWidth="1.5" />
            <path d="M3 26h8M3 28h8" stroke="#fff" />
            <path d="M16 18v11l3-2 2 4 2-1-2-4 3-1z" fill="#000" />
          </svg>
        </TaskBtn>
        <TaskBtn>
          <div className="w-[28px] h-[28px] flex items-center justify-center bg-linear-to-b from-[#d41818] to-[#8a0808]">
            <svg viewBox="0 0 24 24" width="20" height="20" fill="none" stroke="#fff" strokeWidth="1.2"><path d="M4 21c4-3 7-10 7-15 0-3 2-3 2 0 0 5 3 8 8 9-5-1-12 1-17 6z" /></svg>
          </div>
        </TaskBtn>
        <TaskBtn>
          <div className="w-[32px] h-[33px] flex items-center justify-center bg-[#ffe100]">
            <div className="w-[27px] h-[23px] rounded-[50%] bg-[#3c2a1e] flex items-center justify-center text-[8px] font-bold text-[#ffe100]">TALK</div>
          </div>
        </TaskBtn>
        <TaskBtn active>
          <svg viewBox="0 0 32 32" width="32" height="32" fill="none">
            <path d="M8 4l10 8 6 14M8 14l14 0M8 24l6-10M8 4v20" stroke="#111" />
            <path d="M10 28L26 4M26 4l-4 20M8 18h16" stroke="#f01010" strokeWidth="3" />
            <circle cx="7" cy="4" r="3.500" fill="#10d010" /><circle cx="7" cy="14" r="3.500" fill="#10d010" /><circle cx="7" cy="24" r="3.500" fill="#10d010" />
            <circle cx="25" cy="13" r="3.500" fill="#10d010" /><circle cx="25" cy="27" r="3.500" fill="#10d010" />
          </svg>
        </TaskBtn>
      </div>
      <div className="ml-auto flex items-center h-[38px] text-white">
        <svg viewBox="0 0 20 20" width="18" height="18" className="mr-[2px]"><circle cx="9" cy="9" r="8" fill="#5ea04a" /><path d="M3 6c4-3 9-3 12 0-2 4-8 6-12 0z" fill="#8cc8e0" /><path d="M8 18l9-10 2 2-9 9z" fill="#f0b040" stroke="#604010" strokeWidth=".6" /></svg>
        <span className="w-[21px] text-center text-[22px] font-bold leading-none">A</span>
        <span className="w-[21px] text-center text-[20px] font-['Noto_Sans_CJK_KR',sans-serif] leading-none">漢</span>
        <div className="ml-[3px] w-[17px] h-[17px] rounded-full bg-[#1a2fa8] border-2 border-[#c8d8f0] flex items-center justify-center text-[11px] font-bold leading-none">?</div>
        <div className="ml-[10px] w-[8px] flex flex-col items-center gap-[5px]">
          <svg viewBox="0 0 9 9" width="8" height="8" fill="none" stroke="#fff"><path d="M2.500.500h6v5h-6zM.500 3.500h5v5h-5z" /></svg>
          <div className="w-0 h-0 border-x-[3px] border-x-transparent border-t-[3px] border-t-white" />
        </div>
        <div className="ml-[11px] w-0 h-0 border-x-[4px] border-x-transparent border-b-[4px] border-b-white" />
        <svg viewBox="0 0 16 16" width="16" height="16" className="ml-[11px]"><path d="M3 2h8v3h2v5H9v4H3z" fill="#fff" stroke="#000" /></svg>
        <svg viewBox="0 0 16 16" width="16" height="16" className="ml-[9px]"><path d="M2 1v14" stroke="#fff" strokeWidth="2" /><path d="M3 2c4 2 6-1 11 1l-2 3 2 3c-5-2-7 1-11-1z" fill="#fff" /></svg>
        <svg viewBox="0 0 16 16" width="16" height="16" className="ml-[8px]"><path d="M4 6h3l3-3v11l-3-3H4z" fill="#fff" /></svg>
        <svg viewBox="0 0 16 16" width="16" height="16" className="ml-[8px]" fill="#fff"><path d="M1 12h2v2H1zM4.500 10h2v4h-2zM8 7h2v7H8zM11.500 3h2v11h-2z" /></svg>
        <div className="ml-[16px] w-[72px] text-center text-[13px] leading-[17px] text-[#eaf2fa] font-['Liberation_Sans','Noto_Sans_CJK_KR',sans-serif]">
          <div className="whitespace-nowrap">오후 12:14</div>
          <div className="whitespace-nowrap">2019-07-31</div>
        </div>
        <div className="ml-[10px] w-[14px] h-[38px] border border-[#7fa0c0]/70 bg-white/15" />
      </div>
    </div>
  );
}

const Cell = ({ className, children }: { className: string; children?: React.ReactNode }) => (
  <div className={`h-[25px] mt-px shrink-0 flex items-center border-r border-[#d8d8d8] overflow-hidden ${className}`}>{children}</div>
);

const KeyBtn = ({ t }: { t: string }) => (
  <div className="w-[21px] h-[21px] flex items-center justify-center border border-[#808080] rounded-[2px] bg-linear-to-b from-[#f8f8f8] from-50% to-[#d0d0d0] to-50% text-[12px]">{t}</div>
);

function StatusBar() {
  return (
    <div className="h-[27px] flex bg-[#f0f0f0] text-[12px] text-[#111]">
      <Cell className="w-[161px] pb-[2px]"><span className="-ml-[4px]">Idle</span></Cell>
      <Cell className="w-[168px] pl-[4px]"><div className="w-[163px] h-[23px] bg-[#00ff00]" /></Cell>
      <Cell className="w-[170px]" />
      <Cell className="w-[169px] pl-[5px] pb-[2px]">Bottom</Cell>
      <Cell className="w-[171px] pl-[5px] pb-[2px]">20,320, 27,305</Cell>
      <Cell className="w-[29px] pl-[4px]"><KeyBtn t="P" /></Cell>
      <Cell className="w-[28px] pl-[4px]"><KeyBtn t="A" /></Cell>
      <Cell className="w-[170px]" />
      <Cell className="w-[170px]" />
      <Cell className="w-[169px] pl-[5px] pb-[2px]">General edit</Cell>
      <Cell className="w-[170px] pl-[5px] pb-[2px]">Off</Cell>
      <Cell className="w-[169px] pl-[4px]"><div className="w-[163px] h-[23px] pl-px pb-[2px] flex items-center bg-[#00ff00]">DRC</div></Cell>
      <div className="pl-[5px] pb-[2px] flex items-center">0</div>
    </div>
  );
}

export default function App() {
  return (
    <div className="w-[1920px] h-[1080px] bg-white overflow-hidden font-['Liberation_Sans',sans-serif]">
      <div className="w-[1913px] h-[1080px] flex flex-col bg-[#f0f0f0]">
        {/* title bar */}
        <div className="relative h-[21px] flex items-center border-b border-[#4a5f70] bg-[radial-gradient(circle_at_1005px_2px,#7fa8c8_0,transparent_14px),radial-gradient(circle_at_1500px_8px,#86aecf_0,transparent_12px),radial-gradient(circle_at_500px_18px,#cfe0e8_0,transparent_18px),linear-gradient(180deg,#b6dcf8,#a4d4f6)] text-[11.7px] text-[#111]">
          <svg viewBox="0 0 10 16" width="8" height="14" className="shrink-0"><path d="M0 2h7v12H0z" fill="#d01818" /><path d="M0 12L7 3M1 5l5 6" stroke="#18b818" strokeWidth="1.5" /></svg>
          <span className="ml-[6px] whitespace-pre">OrCAD PCB Designer Professional w/PSpice: EX2.brd   Project: C:/WORK/allegro</span>
          <div className="absolute right-[3px] top-0 h-[17px] flex rounded-b-[4px] overflow-hidden border border-t-0 border-[#50708c]">
            <div className="w-[27px] flex items-center justify-center bg-linear-to-b from-[#c8dcec] to-[#8aa8c0] border-r border-[#50708c]"><div className="w-[11px] h-[4px] bg-white border border-[#555]" /></div>
            <div className="w-[28px] flex items-center justify-center bg-linear-to-b from-[#c8dcec] to-[#8aa8c0] border-r border-[#50708c]">
              <svg viewBox="0 0 12 12" width="11" height="11" fill="none" stroke="#333"><path d="M3.500 1.500h7v7h-7z" fill="#fff" /><path d="M1.500 3.500h6v7h-6z" fill="#fff" /></svg>
            </div>
            <div className="w-[46px] flex items-center justify-center bg-linear-to-b from-[#d88a78] to-[#b82c1c]">
              <svg viewBox="0 0 12 12" width="12" height="12" fill="none" stroke="#fff" strokeWidth="2.500"><path d="M2 2l8 8M10 2l-8 8" /></svg>
            </div>
          </div>
        </div>

        {/* menu */}
        <div className="relative h-[21px] flex items-center pl-px bg-linear-to-b from-white from-20% to-[#d6daec] to-60% text-[12px] text-[#111]">
          {menus.map(([m, w]) => <span key={m} className={`${w} shrink-0`}>{m}</span>)}
          <span className="absolute right-0 top-[2px] text-[16px] font-bold tracking-[1.500px] leading-none text-[#333] font-['Liberation_Mono',monospace]">cadence</span>
        </div>
        <div className="h-[3px] bg-[#cc0000]" />
        <Toolbar />

        {/* workspace */}
        <div className="flex h-[934px]">
          <div className="w-[1569px] flex flex-col">
            <div className="mt-[9px] ml-[2px] w-[1555px] h-[791px] bg-black overflow-hidden">
              <Board />
            </div>
            <div className="flex flex-1">
              <div className="w-[790px]">
                <DockTitle title="Command" className="h-[35px] pl-[9px] pr-[7px] pt-[10px]" />
                <div className="flex h-[95px] border-y border-[#666] bg-white">
                  <div className="w-[769px] border-r border-[#666] overflow-hidden pt-[2px] text-[16px] leading-[20px] text-[#111]">
                    <div className="-ml-[7px]">Loading axlcore.cxt</div>
                    <div className="-ml-[7px] whitespace-pre">Last pick:  118.110 56.515</div>
                    <div className="-ml-[3px]">No element found.</div>
                    <div className="-ml-[3px]">Command &gt;</div>
                  </div>
                  <div className="w-[19px] bg-[#f4f4f4] flex flex-col items-center py-[8px] justify-between">
                    <div className="w-0 h-0 border-x-[4px] border-x-transparent border-b-[5px] border-b-[#aaa]" />
                    <div className="w-0 h-0 border-x-[4px] border-x-transparent border-t-[5px] border-t-[#aaa]" />
                  </div>
                </div>
              </div>
              <div className="w-[779px]">
                <DockTitle title="View" className="h-[35px] pl-[19px] pr-[10px] pt-[10px]" />
                <div className="ml-[5px] mt-px w-[767px] h-[93px] bg-black border-2 border-[#e8e8e8] flex overflow-hidden">
                  <div className="w-[35px] shrink-0" />
                  <div className="w-px bg-[#5f8f2c] shrink-0" />
                  <div className="w-[28px] shrink-0" />
                  <div className="w-[121px] h-[84px] mt-px border border-[#aaaaaa] shrink-0" />
                  <div className="w-[107px] shrink-0" />
                  <div className="w-px bg-[#5f8f2c] shrink-0" />
                </div>
              </div>
            </div>
          </div>

          <div className="w-[344px] flex flex-col">
            <DockTitle title="Find" className="h-[20px] pl-[17px] pr-[5px]" />
            <FindPanel />
            <div className="h-[25px] flex items-end border-b border-[#a0a0a0] text-[12px] text-[#111]">
              <div className="w-[69px] h-[20px] bg-white border-t border-r border-[#a0a0a0] flex items-center justify-center">Options</div>
              <div className="w-[67px] h-[19px] bg-linear-to-b from-[#f6f6f6] to-[#d8d8d8] border border-b-0 border-l-0 border-[#a0a0a0] flex items-center justify-center">Visibility</div>
            </div>
            <DockTitle title="Options" className="h-[20px] pl-[17px] pr-[5px]" />
            <OptionsPanel />
          </div>
        </div>

        <StatusBar />
        <Taskbar />
      </div>
    </div>
  );
}
